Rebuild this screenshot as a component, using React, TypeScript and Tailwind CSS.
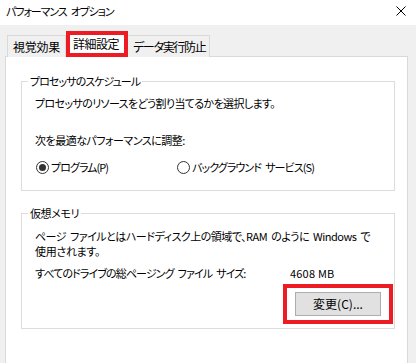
import React from "react";

const font = "font-['Noto_Sans_CJK_JP','Noto_Sans',sans-serif] [font-feature-settings:'palt']";

function T({ text, cls }: { text: string; cls: string }) {
  const parts = text.split(" ");
  return (
    <span className={`whitespace-nowrap ${cls}`}>
      {parts.map((p, i) => (
        <React.Fragment key={i}>
          {i > 0 && <span className="inline-block w-[4px]" />}
          {p}
        </React.Fragment>
      ))}
    </span>
  );
}

function Radio({ checked, children }: { checked: boolean; children: React.ReactNode }) {
  return (
    <div className="flex items-center">
      <span className="w-[13px] h-[13px] rounded-full border border-[#333333] bg-white flex items-center justify-center">
        {checked && <span className="w-[7px] h-[7px] rounded-full bg-[#333333]" />}
      </span>
      <span className="ml-[2px]">{children}</span>
    </div>
  );
}

export default function App() {
  return (
    <div className={`w-[416px] h-[363px] bg-[#f0f0f0] overflow-hidden text-[11px] leading-[16px] text-black ${font}`}>
      {/* title bar */}
      <div className="h-[25px] bg-white flex items-center justify-between pl-[6px] pr-[10px]">
        <span className="-mt-[3px]">
          <T text="パフォーマンス オプション" cls="tracking-[-1.1px]" />
        </span>
        <svg width="10" height="10" viewBox="0 0 10 10" className="-mt-[3px]">
          <path d="M0.5 0.5 L9.5 9.5 M9.5 0.5 L0.5 9.5" stroke="#000" strokeWidth="1" />
        </svg>
      </div>

      {/* tabs */}
      <div className="mt-[6px] h-[26px] flex items-end pl-[7px] relative z-10 text-[12px]">
        <div className="w-[59px] h-[22px] border border-b-0 border-[#d9d9d9] bg-[#f0f0f0] pl-[5px] flex items-center whitespace-nowrap tracking-[-0.25px]">
          視覚効果
        </div>
        <div className="w-[62px] h-[26px] border-[4px] border-[#ed1c24] bg-white pl-[3px] flex items-center whitespace-nowrap tracking-[-0.5px]">
          詳細設定
        </div>
        <div className="w-[82px] h-[22px] border border-b-0 border-l-0 border-[#d9d9d9] bg-[#f0f0f0] pl-[5px] flex items-center whitespace-nowrap tracking-[-1.3px]">
          データ実行防止
        </div>
      </div>

      {/* panel */}
      <div className="-mt-[1px] ml-[5px] w-[403px] h-[320px] border border-[#d9d9d9] bg-white">
        <fieldset className="mt-[16px] ml-[15px] w-[374px] min-w-0 border border-[#dcdcdc] pl-[13px] pb-[15px]">
          <legend className="ml-[-7px] px-[2px] leading-[16px]">
            <T text="プロセッサのスケジュール" cls="tracking-[-0.95px]" />
          </legend>
          <div className="mt-[6px]">
            <T text="プロセッサのリソースをどう割り当てるかを選択します。" cls="tracking-[-0.63px]" />
          </div>
          <div className="mt-[21px]">
            <T text="次を最適なパフォーマンスに調整:" cls="tracking-[-0.5px]" />
          </div>
          <div className="mt-[11px] flex">
            <div className="w-[141px] ml-[1px]">
              <Radio checked>
                <T text="プログラム(P)" cls="tracking-[-0.95px]" />
              </Radio>
            </div>
            <Radio checked={false}>
              <T text="バックグラウンド サービス(S)" cls="tracking-[-0.9px]" />
            </Radio>
          </div>
        </fieldset>

        <fieldset className="mt-[14px] ml-[15px] w-[374px] min-w-0 border border-[#dcdcdc] pl-[13px] pb-[4px]">
          <legend className="ml-[-7px] px-[2px] leading-[16px]">
            <T text="仮想メモリ" cls="tracking-[-0.4px]" />
          </legend>
          <div className="mt-[8px] h-[15px] leading-[15px]">
            <T text="ページ ファイルとはハードディスク上の領域で、RAM のように Windows で" cls="tracking-[-0.5px]" />
          </div>
          <div className="h-[15px] leading-[15px]">
            <T text="使用されます。" cls="tracking-[-0.33px]" />
          </div>
          <div className="mt-[6px] flex">
            <span className="w-[255px]">
              <T text="すべてのドライブの総ページング ファイル サイズ:" cls="tracking-[-0.9px]" />
            </span>
            <span className="whitespace-nowrap tracking-[0.2px]">4608 MB</span>
          </div>
          <div className="mt-[3px] flex justify-end pr-[1px]">
            <div className="border-[4px] border-[#ed1c24] px-[8px] py-[4px]">
              <button className="w-[86px] h-[24px] bg-[#e1e1e1] border border-[#adadad] flex items-center justify-center whitespace-nowrap text-[12px]">
                変更(C)...
              </button>
            </div>
          </div>
        </fieldset>
      </div>
    </div>
  );
}
